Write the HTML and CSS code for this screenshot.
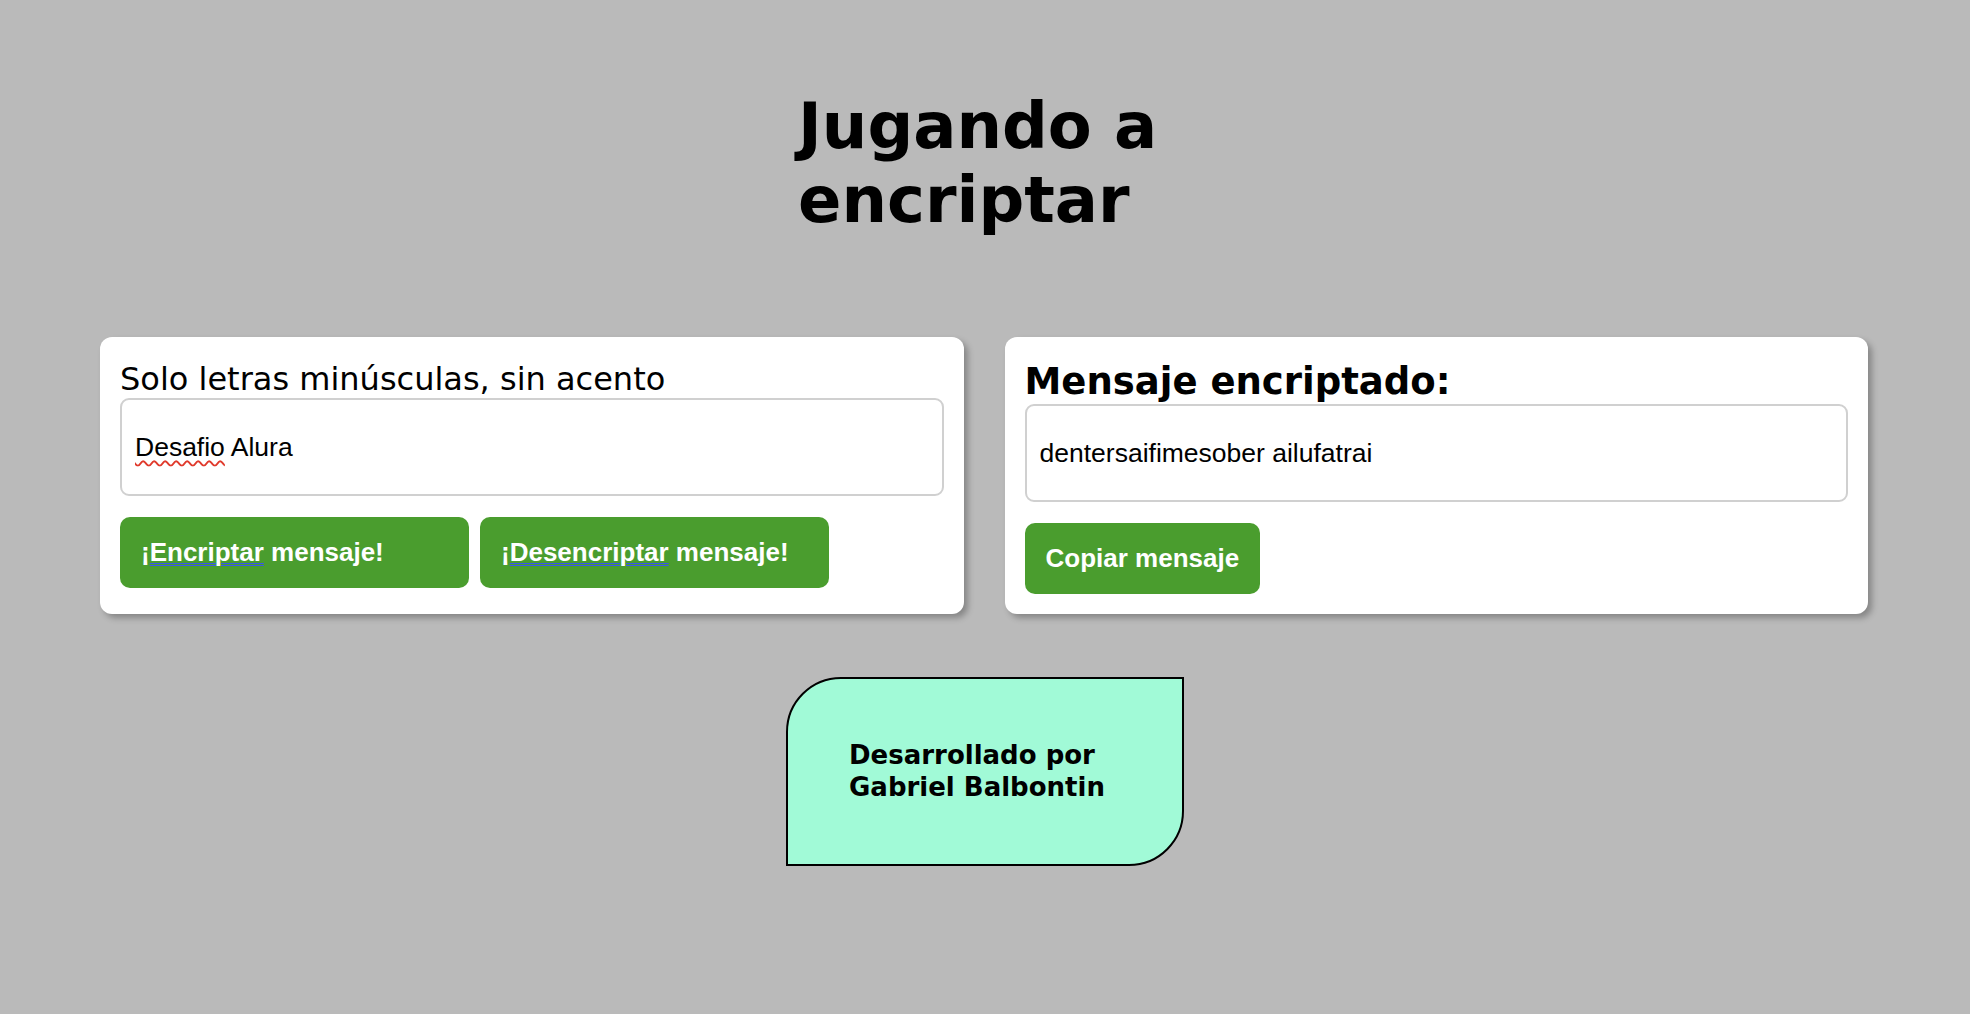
FILE: index.html
```html
<!DOCTYPE html>
<html lang="es">
<head>
<meta charset="utf-8">
<title>Jugando a encriptar</title>
<link rel="stylesheet" href="styles.css">
</head>
<body>
<header class="top">
  <h1 class="title">Jugando a encriptar</h1>
</header>
<main class="panels">
  <section class="card">
    <label class="label">Solo letras minúsculas, sin acento</label>
    <div class="field"><span class="spell">Desafio</span> Alura</div>
    <div class="actions">
      <button class="btn btn-wide">¡<span class="grammar">Encriptar</span> mensaje!</button>
      <button class="btn btn-wide">¡<span class="grammar">Desencriptar</span> mensaje!</button>
    </div>
  </section>
  <section class="card">
    <h2 class="card-title">Mensaje encriptado:</h2>
    <div class="field">dentersaifimesober ailufatrai</div>
    <div class="actions">
      <button class="btn">Copiar mensaje</button>
    </div>
  </section>
</main>
<footer class="credit">
  <p class="credit-text">Desarrollado por Gabriel Balbontin</p>
</footer>
</body>
</html>
```
FILE: styles.css
```css
html, body {
  margin: 0;
  padding: 0;
}
body {
  background: #bababa;
  color: #000;
  font-family: "DejaVu Sans", Verdana, sans-serif;
}
.top {
  padding-top: 89px;
}
.title {
  width: 374px;
  margin: 0 auto;
  font-family: "DejaVu Sans", Verdana, sans-serif;
  font-weight: bold;
  font-size: 64px;
  line-height: normal;
}
.panels {
  display: flex;
  gap: 41px;
  padding: 0 102px 0 100px;
  margin-top: 100px;
}
.card {
  flex: 1;
  display: flex;
  flex-direction: column;
  background: #fff;
  border-radius: 12px;
  padding: 23px 20px 20px;
  box-shadow: 4px 4px 6px rgba(0, 0, 0, 0.28);
}
.label {
  display: block;
  font-size: 32px;
  line-height: normal;
}
.card-title {
  margin: 0 0 1px;
  font-size: 37px;
  font-weight: bold;
  line-height: normal;
}
.field {
  box-sizing: border-box;
  height: 98px;
  display: flex;
  align-items: center;
  padding: 0 13px;
  border: 2px solid #d0d0d0;
  border-radius: 9px;
  background: #fff;
  font-family: "Liberation Sans", Arial, sans-serif;
  font-size: 26.5px;
  white-space: pre;
}
.spell {
  text-decoration: underline wavy #e0392b;
  text-decoration-thickness: 2px;
  text-underline-offset: 4px;
}
.actions {
  display: flex;
  gap: 11px;
  margin-top: 21px;
}
.btn {
  height: 71px;
  padding: 0 21px;
  border: none;
  border-radius: 10px;
  background: #4a9d2e;
  color: #fff;
  font-family: "Liberation Sans", Arial, sans-serif;
  font-weight: bold;
  font-size: 26px;
  text-align: center;
  cursor: pointer;
}
.btn-wide {
  width: 349px;
  text-align: left;
}
.grammar {
  text-decoration: underline double #3a55ee;
  text-decoration-thickness: 1px;
  text-underline-offset: 2px;
}
.credit {
  display: flex;
  justify-content: center;
  margin-top: 63px;
}
.credit-text {
  box-sizing: border-box;
  width: 398px;
  margin: 0;
  padding: 61px;
  background: #a1fad7;
  border: 2.5px solid #000;
  border-radius: 55px 0 55px 0;
  font-weight: bold;
  font-size: 26px;
  line-height: 31.7px;
}
```
